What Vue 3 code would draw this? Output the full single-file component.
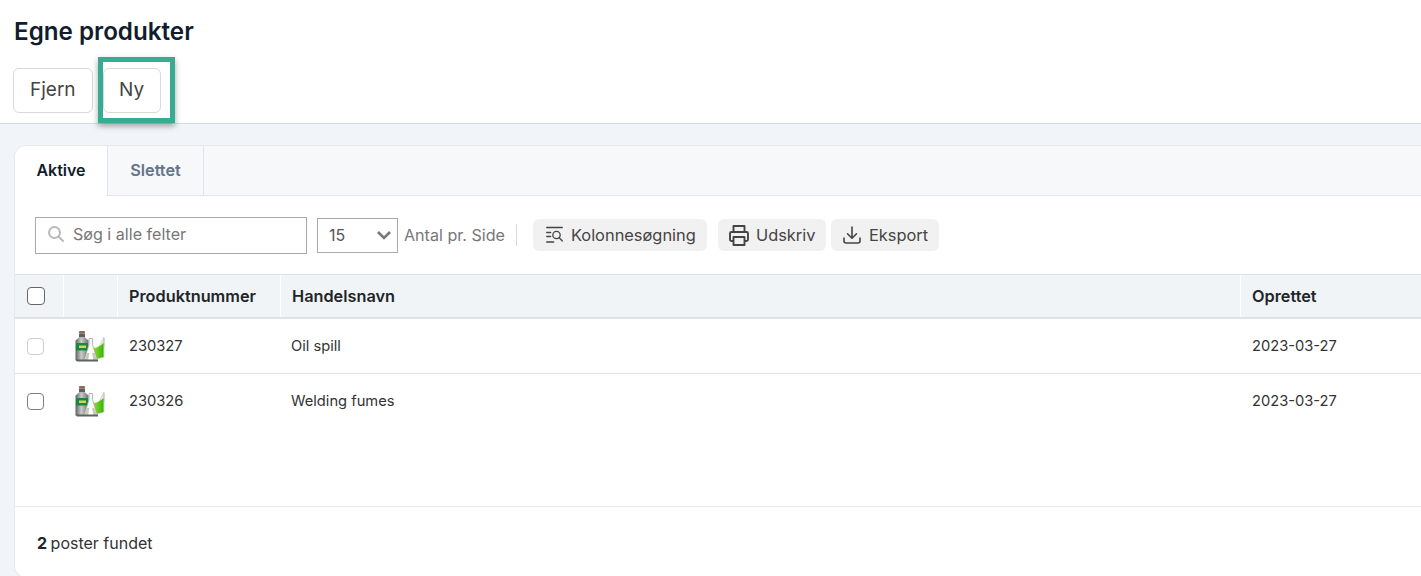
<script setup>
const rows = [
  { id: '230327', name: 'Oil spill', date: '2023-03-27', faded: true },
  { id: '230326', name: 'Welding fumes', date: '2023-03-27', faded: false }
]
</script>

<template>
  <div class="page">
    <header class="head">
      <h1>Egne produkter</h1>
      <div class="actions">
        <button class="btn">Fjern</button>
        <div class="hl-wrap">
          <button class="btn ny">Ny</button>
          <span class="hl"></span>
        </div>
      </div>
    </header>
    <main class="body">
      <section class="card">
        <nav class="tabs">
          <div class="tab active">Aktive</div>
          <div class="tab">Slettet</div>
          <div class="tab-rest"></div>
        </nav>
        <div class="toolbar">
          <label class="search">
            <svg width="18" height="18" viewBox="0 0 18 18" fill="none" stroke="#b9b9b9" stroke-width="2"><circle cx="7.5" cy="7.5" r="5.500"/><path d="M11.8 11.8 16 16" stroke-linecap="round"/></svg>
            <span>Søg i alle felter</span>
          </label>
          <div class="select">
            <span>15</span>
            <svg width="16" height="10" viewBox="0 0 16 10" fill="none" stroke="#777" stroke-width="2.6"><path d="M2 2l6 6 6-6"/></svg>
          </div>
          <span class="per">Antal pr. Side</span>
          <span class="divider"></span>
          <button class="tool t1">
            <svg width="17" height="18" viewBox="0 0 17 18" fill="none" stroke="#444" stroke-width="1.3" stroke-linecap="round"><path d="M0.700 1.500h15.600M0.700 6.500h4M0.700 10.500h4M0.700 16h7"/><circle cx="10.500" cy="9" r="3.700"/><path d="M13.200 11.700 16.300 15"/></svg>
            Kolonnesøgning
          </button>
          <button class="tool t2">
            <svg width="20" height="21" viewBox="0 0 20 21" fill="none" stroke="#444" stroke-width="1.9" stroke-linejoin="round"><path d="M4.500 7V1h11v6"/><path d="M4.500 16H2.500A1.500 1.500 0 0 1 1 14.500V8.500A1.500 1.500 0 0 1 2.500 7h15A1.500 1.500 0 0 1 19 8.500v6a1.500 1.500 0 0 1-1.500 1.500h-2"/><path d="M4.500 12h11v8h-11z"/></svg>
            Udskriv
          </button>
          <button class="tool t3">
            <svg width="18" height="18" viewBox="0 0 18 18" fill="none" stroke="#444" stroke-width="1.600" stroke-linecap="round" stroke-linejoin="round"><path d="M9 1v11M4.500 7.800 9 12.200l4.500-4.400"/><path d="M1 12v3a2 2 0 0 0 2 2h12a2 2 0 0 0 2-2v-3"/></svg>
            Eksport
          </button>
        </div>
        <div class="table">
          <div class="tr th">
            <div class="c c-check"><span class="cb strong"></span></div>
            <div class="c c-icon"></div>
            <div class="c c-num">Produktnummer</div>
            <div class="c c-name">Handelsnavn</div>
            <div class="c c-date">Oprettet</div>
          </div>
          <div v-for="r in rows" :key="r.id" class="tr td">
            <div class="c c-check"><span class="cb" :class="{ faded: r.faded }"></span></div>
            <div class="c c-icon">
              <svg width="32" height="32" viewBox="0 0 32 32">
                <defs>
                  <linearGradient id="glass" x1="0" y1="0" x2="1" y2="0"><stop offset="0" stop-color="#5f6361"/><stop offset=".45" stop-color="#c9ccca"/><stop offset="1" stop-color="#6c706e"/></linearGradient>
                  <linearGradient id="liq" x1="0" y1="0" x2="1" y2="0"><stop offset="0" stop-color="#8fd83c"/><stop offset="1" stop-color="#35b800"/></linearGradient>
                </defs>
                <path d="M19 30 31 27V8 17 7z" fill="#e6e8e6" stroke="#bfc2c0" stroke-width=".6"/>
                <path d="M21 29.500 30.500 27V13c-3 3-6 4.500-9.500 5z" fill="url(#liq)"/>
                <rect x="6" y="1" width="6" height="2.500" rx="1" fill="#8d6b52"/>
                <rect x="6" y="3.500" width="6" height="4" fill="#5d605e"/>
                <path d="M2.500 10.500 6 7.500h6l3.500 3v18.500a2 2 0 0 1-2 2h-9a2 2 0 0 1-2-2z" fill="url(#glass)"/>
                <rect x="3" y="13" width="12" height="7.500" fill="#158844"/>
                <rect x="6" y="15.500" width="7" height="2.500" fill="#d4d94c"/>
                <path d="M16 8.500h3.500v6L24.500 30.500H11L16 14.500z" fill="#f7f8f7" stroke="#9b9e9c" stroke-width=".7"/>
                <path d="M14 23h7.500L24 30.500H11.500z" fill="#c6cdae"/>
                <path d="M17 20h1.500l2 10.500H15z" fill="#fff"/>
                <path d="M2 29.500h23v2H4z" fill="#5f6260"/>
              </svg>
            </div>
            <div class="c c-num">{{ r.id }}</div>
            <div class="c c-name">{{ r.name }}</div>
            <div class="c c-date">{{ r.date }}</div>
          </div>
        </div>
        <footer class="foot"><b>2</b> poster fundet</footer>
      </section>
    </main>
  </div>
</template>

<style>
html, body { margin: 0; overflow: hidden; }
</style>

<style scoped>
.page { width: 1421px; height: 576px; overflow: hidden; font-family: Inter, "Noto Sans", sans-serif; background: #f1f4f8; display: flex; flex-direction: column; }
.head { height: 123px; flex: none; background: #fff; border-bottom: 1px solid #d5dae0; padding-left: 13px; }
h1 { margin: 0; padding-top: 18px; font-size: 24.2px; line-height: 28px; font-weight: 600; color: #111c2d; padding-left: 1px; }
.actions { display: flex; gap: 10px; margin-top: 22px; }
.btn { height: 45px; box-sizing: border-box; border: 1px solid #d9d9d9; border-radius: 6px; background: #fff; font: 400 19px Inter, sans-serif; color: #444; padding: 0 16px 2px; }
.hl-wrap { position: relative; }
.ny { display: block; width: 58px; padding-left: 0; padding-right: 0; }
.hl { position: absolute; left: -5px; right: -14px; top: -11px; bottom: -10px; border: 5px solid #38ac92; box-shadow: 0 3px 6px rgba(0,0,0,.35); pointer-events: none; }
.body { flex: 1; padding: 21px 0 0 14px; min-height: 0; }
.card { height: calc(100% + 2px); box-sizing: border-box; background: #fff; border: 1px solid #e6eaef; border-right: 0; border-radius: 12px 0 0 12px; display: flex; flex-direction: column; }
.tabs { display: flex; height: 50px; flex: none; }
.tab { box-sizing: border-box; height: 50px; display: flex; align-items: center; justify-content: center; padding-bottom: 2px; font-size: 16.300px; font-weight: 600; color: #64748b; width: 96px; background: #f6f8fa; border-right: 1px solid #dfe4ea; border-bottom: 1px solid #dfe4ea; }
.tab.active { width: 93px; background: #fff; color: #111c2d; font-size: 16px; border-bottom: 0; border-radius: 12px 0 0 0; }
.tab-rest { flex: 1; background: #f6f8fa; border-bottom: 1px solid #dfe4ea; }
.toolbar { display: flex; align-items: center; height: 78px; flex: none; padding-left: 20px; }
.search { width: 272px; height: 37px; box-sizing: border-box; border: 1px solid #aaa; display: flex; align-items: center; gap: 8px; padding: 0 0 2px 11px; font-size: 16.100px; color: #777; }
.select { margin-left: 10px; width: 81px; height: 35px; box-sizing: border-box; border: 1px solid #aaa; display: flex; align-items: center; justify-content: space-between; padding: 0 5px 0 11px; font-size: 16px; color: #555; }
.per { margin-left: 6px; font-size: 16.100px; color: #777; white-space: nowrap; }
.divider { width: 1px; height: 22px; background: #d8d8d8; margin: 0 16px 0 11px; }
.tool { height: 32px; border: 0; border-radius: 6px; background: #f1f1f1; display: flex; align-items: center; font: 400 16.400px Inter, sans-serif; color: #444; white-space: nowrap; }
.t1 { width: 174px; gap: 8px; padding: 0 0 0 13px; }
.t2 { width: 108px; gap: 7px; padding: 0 0 0 11px; margin-left: 11px; }
.t3 { width: 108px; gap: 8px; padding: 0 0 0 12px; margin-left: 5px; }
.table { flex: none; }
.tr { display: flex; box-sizing: border-box; }
.th { height: 45px; background: #f1f4f6; border-top: 1px solid #dee2e6; border-bottom: 2px solid #dee2e6; font-size: 16.300px; font-weight: 600; color: #212529; }
.th .c + .c { border-left: 1px solid #fff; }
.td { height: 55px; border-bottom: 1px solid #dee2e6; font-size: 14.700px; color: #333; }
.td:last-child { border-bottom-color: transparent; }
.td .c-num, .td .c-name, .td .c-date { padding-bottom: 1px; }
.c { display: flex; align-items: center; box-sizing: border-box; padding-left: 11px; }
.c-check { width: 48px; padding-left: 12px; }
.c-icon { width: 54px; padding-left: 10px; }
.c-num { width: 163px; }
.td .c-num { padding-left: 12px; }
.c-name { width: 960px; }
.c-date { flex: 1; }
.td .c-date { padding-left: 12px; }
.cb { width: 17px; height: 17px; box-sizing: border-box; border: 1.500px solid #808080; border-radius: 4px; background: #fff; }
.cb.strong { width: 18px; height: 18px; border-color: #666; }
.cb.faded { border-color: #cdcdcd; }
.foot { margin-top: 77px; border-top: 1px solid #e6eaef; padding: 26px 0 0 22px; font-size: 16px; line-height: 20px; color: #333; }
.foot b { font-weight: 700; color: #212529; margin-right: -1px; }
</style>
